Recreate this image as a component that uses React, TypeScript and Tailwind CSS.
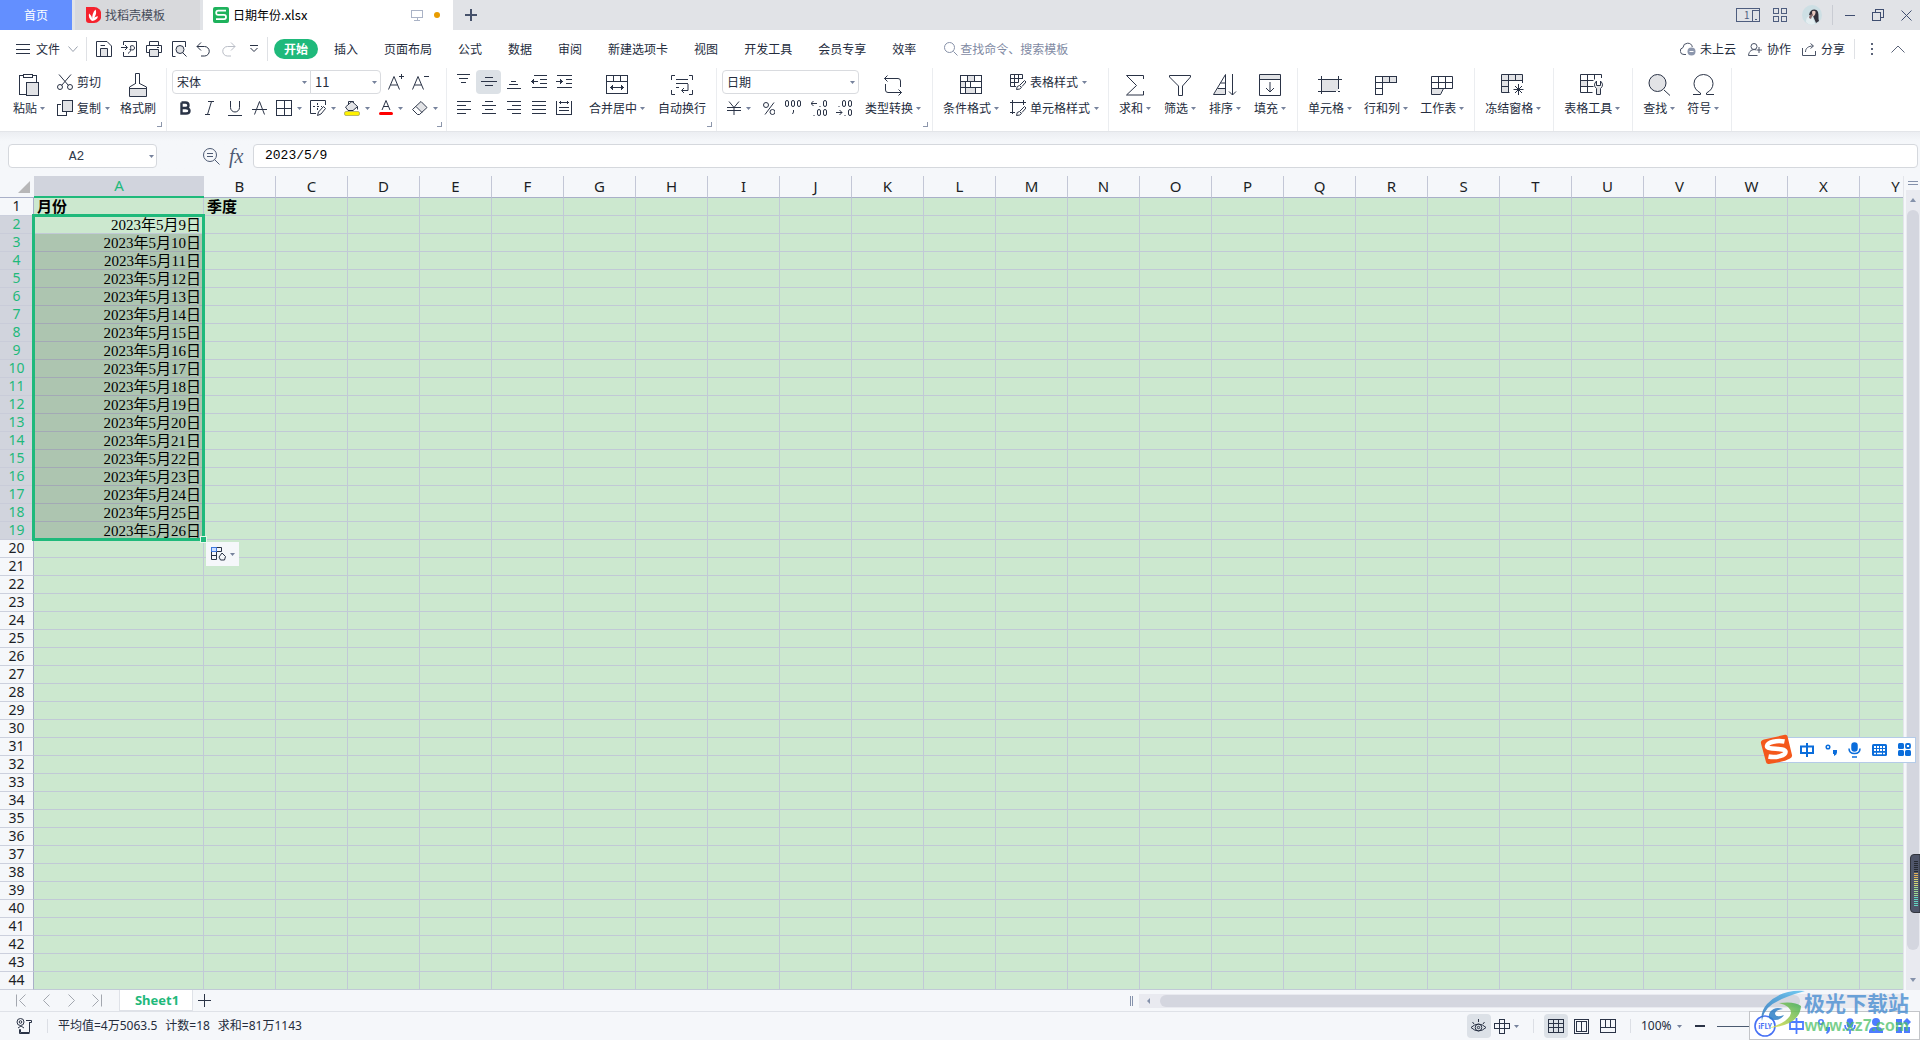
import { useState } from "react";
import type { ReactNode } from "react";
import clsx from "clsx";

const COLUMNS = "ABCDEFGHIJKLMNOPQRSTUVWXY".split("");
const ROWS = Array.from({ length: 44 }, (_, i) => i + 1);
const DATES = Array.from({ length: 18 }, (_, i) => `2023年5月${i + 9}日`);

const MENUS = ["开始", "插入", "页面布局", "公式", "数据", "审阅", "新建选项卡", "视图", "开发工具", "会员专享", "效率"];

const INK = "#2a3346";
const SHADE = "#e2e3e6";

interface IconProps {
  w: number;
  h: number;
  d?: string;
  fill?: string;
  color?: string;
  crisp?: boolean;
  children?: ReactNode;
}

// fill is a shaded area drawn under the strokes
function Icon({ w, h, d, fill, color = INK, crisp, children }: IconProps) {
  return (
    <svg
      width={w}
      height={h}
      viewBox={`0 0 ${w} ${h}`}
      fill="none"
      stroke={color}
      className="shrink-0"
      shapeRendering={crisp ? "crispEdges" : "auto"}
      aria-hidden="true"
    >
      {fill && <path d={fill} fill={SHADE} stroke="none" />}
      {d && <path d={d} />}
      {children}
    </svg>
  );
}

function Zero({ x, y }: { x: number; y: number }) {
  return <rect x={x} y={y} width="3" height="6" rx="1.5" />;
}

function Caret() {
  return (
    <svg width="5" height="3" viewBox="0 0 5 3" className="shrink-0" aria-hidden="true">
      <path d="M0 0h5L2.5 3z" fill="#76829c" />
    </svg>
  );
}

function Group({ className, launcher, children }: { className?: string; launcher?: boolean; children: ReactNode }) {
  return (
    <div className={clsx("relative flex shrink-0 border-r border-[#ebedf0] pt-[2px]", className)}>
      {children}
      {launcher && (
        <button aria-label="更多设置" className="absolute right-1 bottom-1">
          <Icon w={5} h={5} d="M4.5 0v4.5H0" color="#8c96ab" crisp />
        </button>
      )}
    </div>
  );
}

function BigButton({ label, icon, caret = true }: { label: string; icon: ReactNode; caret?: boolean }) {
  return (
    <button className="flex shrink-0 flex-col items-center pt-[2px]">
      <span className="flex h-[26px] items-center">{icon}</span>
      <span className="flex h-5 items-center gap-[3px] leading-5 whitespace-nowrap">
        {label}
        {caret && <Caret />}
      </span>
    </button>
  );
}

function SmallButton({ label, icon, caret = true }: { label: string; icon: ReactNode; caret?: boolean }) {
  return (
    <button className="flex h-6 items-center gap-1 whitespace-nowrap">
      {icon}
      {label}
      {caret && <Caret />}
    </button>
  );
}

function ToolButton({ label, caret, active, children }: { label: string; caret?: boolean; active?: boolean; children: ReactNode }) {
  return (
    <button
      aria-label={label}
      className={clsx("flex h-6 items-center justify-center rounded-sm", caret ? "w-[34px] gap-[5px]" : "w-[25px]", active && "bg-[#dce1e6]")}
    >
      {children}
      {caret && <Caret />}
    </button>
  );
}

function Select({ label, value, className }: { label: string; value: string; className?: string }) {
  return (
    <span className={clsx("relative flex h-6 items-center border border-[#d9dbdf] bg-white", className)}>
      <select aria-label={label} className="h-full w-full appearance-none bg-transparent pl-1 outline-none">
        <option>{value}</option>
      </select>
      <span className="pointer-events-none absolute right-[3px]">
        <Caret />
      </span>
    </span>
  );
}

function TitleBar() {
  return (
    <header className="flex h-[30px] shrink-0 items-stretch bg-[#e1e3e7]">
      <button className="mr-[3px] w-[72px] bg-[#638fff] text-white">首页</button>
      <button className="mr-[3px] flex w-[125px] items-center gap-1 bg-[#d8d9dc] pl-[11px] text-[#464c5a]">
        <svg width="15" height="16" viewBox="0 0 15 16" aria-hidden="true">
          <path d="M0 0h8a7.5 8 0 0 1 0 16H3a3 3 0 0 1-3-3z" fill="#f5222d" />
          <path d="M6 14C3 12 2.500 9 3 6.500 5 8 6 10 6.200 12 6 9 7 5 9.500 2.500 11 6 9.500 9 8 11c1-1 2.500-1.700 4-1.700C11.500 12 9 14 6 14z" fill="#fff" />
        </svg>
        找稻壳模板
      </button>
      <div className="flex w-[250px] items-center bg-white pr-[13px] pl-[10px] text-black">
        <svg width="16" height="16" viewBox="0 0 16 16" aria-hidden="true">
          <rect width="16" height="16" rx="2" fill="#1eb25c" />
          <path d="M13 3.700H5.200Q3.200 3.700 3.200 5.800T5.200 7.900H11q2 0 2 2.100t-2 2.200H3" fill="none" stroke="#fff" strokeWidth="1.800" />
        </svg>
        <span className="ml-1 flex-1 text-[13px]">
          <span className="text-xs">日期年份</span>.xlsx
        </span>
        <Icon w={12} h={12} d="M.5 1.500h11v7H.5zM6 8.500v3M3 11.500h6" color="#aab3c6" crisp />
        <span className="ml-[11px] h-[6px] w-[6px] rounded-full bg-[#e89c00]" />
      </div>
      <button aria-label="新建标签" className="flex w-9 items-center justify-center">
        <svg width="12" height="12" viewBox="0 0 12 12" aria-hidden="true">
          <path d="M6 0v12M0 6h12" stroke="#46526b" strokeWidth="2" />
        </svg>
      </button>
      <div className="ml-auto flex items-center">
        <button aria-label="多窗口">
          <Icon w={24} h={14} d="M.5.500h23v13H.5zM16.500 13V2.500H23M19 11.500h2" color="#4e5d7e" crisp>
            <text x="8" y="11" fontSize="10" fill="#4e5d7e" stroke="none">1</text>
          </Icon>
        </button>
        <button aria-label="应用" className="ml-[13px]">
          <Icon w={14} h={14} d="M.5.500h5v5h-5zM8.500.500h5v5h-5zM.5 8.500h5v5h-5zM8.500 8.500h5v5h-5z" color="#4e5d7e" crisp />
        </button>
        <button aria-label="账户" className="ml-[15px]">
          <svg width="20" height="20" viewBox="0 0 20 20" aria-hidden="true">
            <circle cx="10" cy="10" r="10" fill="#cddfe4" />
            <path d="M7 10c1-6 7-7 9-3 1 3 0 7 1 9l-3 2-3-7z" fill="#33313b" />
            <path d="M10 6.500c2-1.500 4-.5 3.500 1.500s-1.500 3.500-3 3.500z" fill="#e9c9bf" />
            <path d="M4 17c0-5 3-7 6-6l3 8q-6 2-9-2z" fill="#e4eef1" />
            <path d="M7 13c0-3 2-4 4-4l-2 5z" fill="#8a6b6c" />
          </svg>
        </button>
        <span className="ml-[10px] h-5 w-px bg-[#c9ccd3]" />
        <button aria-label="最小化" className="ml-3">
          <Icon w={10} h={12} d="M0 6.500h10" color="#3f4e70" crisp />
        </button>
        <button aria-label="还原" className="ml-[17px]">
          <Icon w={12} h={12} d="M.5 3.500h8v8h-8zM3.500 3V.5h8v8H9" color="#3f4e70" crisp />
        </button>
        <button aria-label="关闭" className="mr-2 ml-[17px]">
          <Icon w={11} h={11} d="M.5.500l10 10M10.500.500l-10 10" color="#3f4e70" />
        </button>
      </div>
    </header>
  );
}

function MenuBar() {
  const [active, setActive] = useState("开始");
  return (
    <nav className="flex h-[38px] shrink-0 items-center bg-white">
      <button className="ml-4 flex items-center">
        <Icon w={14} h={11} d="M0 .5h14M0 5.500h14M0 9.500h14" crisp />
        <span className="mr-2 ml-[6px]">文件</span>
        <Icon w={10} h={6} d="M.5.500L5 5.500 9.500.500" color="#9aa1ad" />
      </button>
      <span className="mr-[9px] ml-[8px] h-6 w-px bg-[#dfe1e5]" />
      <div className="flex items-center gap-[9px]">
        <button aria-label="保存">
          <Icon w={16} h={16} d="M.5 15.500V.5H11l4.500 4.500v10.500zM4.500 15V7.500h7V15M4.500 4.500H9" fill="M5 8h6v7H5z" />
        </button>
        <button aria-label="输出为PDF">
          <Icon w={16} h={16} d="M2.500 4V.5h13v15h-13V11M0 6.500h6M4 4l2.500 2.500L4 9M7 12.500c3-2 3-4 2.500-7.500 2-1 4 0 4 2s-2 2.500-5 1.500" />
        </button>
        <button aria-label="打印">
          <Icon w={16} h={16} d="M3.500 4V.5h9V4M3.500 11.500h-3v-7h15v7h-3M3.500 8.500h9v7h-9zM11 6.500h2" fill="M4 9h8v6H4z" />
        </button>
        <button aria-label="打印预览">
          <Icon w={16} h={16} d="M4.500 15.500h-3V.5h13V6M11.500 11.500l4 4">
            <circle cx="9" cy="8.500" r="4" fill={SHADE} />
          </Icon>
        </button>
        <button aria-label="撤销">
          <Icon w={15} h={15} d="M5 .5L1 4.500l4 4M1 4.500h7.500a4.700 4.700 0 0 1 0 9.500H5" />
        </button>
        <button aria-label="恢复" className="ml-px">
          <Icon w={15} h={15} d="M10 .5l4 4-4 4M14 4.500H6.500A4.700 4.700 0 0 0 6.500 14H10" color="#b9bdc6" />
        </button>
        <button aria-label="自定义快速访问" className="ml-[5px]">
          <Icon w={8} h={8} d="M0 .5h8M.5 3L4 6.500 7.500 3" />
        </button>
      </div>
      <span className="mr-[6px] ml-[9px] h-6 w-px bg-[#dfe1e5]" />
      <div className="flex items-center gap-[2px]">
        {MENUS.map((m) => (
          <button
            key={m}
            onClick={() => setActive(m)}
            className={clsx("h-5 rounded-full whitespace-nowrap", m === active ? "mr-[2px] w-11 bg-[#1fb97b] font-bold text-white" : "px-3")}
          >
            {m}
          </button>
        ))}
      </div>
      <label className="ml-4 flex items-center gap-[2px]">
        <Icon w={14} h={14} d="M9.500 9.500L13.500 13.500" color="#8791a8">
          <circle cx="5.500" cy="5.500" r="5" />
        </Icon>
        <input aria-label="搜索" placeholder="查找命令、搜索模板" className="w-32 bg-transparent outline-none placeholder:text-[#7f8aa3]" />
      </label>
      <div className="ml-auto flex items-center whitespace-nowrap">
        <button className="flex items-center gap-1">
          <Icon w={16} h={14} d="M6 12.500H4A3.500 3.500 0 0 1 3 5.600a4.700 4.700 0 0 1 9.300-.6" color="#4a5366">
            <circle cx="11.500" cy="9.500" r="4" fill="#8d97ad" stroke="none" />
            <path d="M9.500 9.500h4" stroke="#fff" />
          </Icon>
          未上云
        </button>
        <button className="ml-3 flex items-center gap-[5px]">
          <Icon w={14} h={13} d="M8 6.800c-4-.8-7 1-7.500 5.700h9M11 4v6M8.500 7H14" color="#4a5366">
            <circle cx="6" cy="3.500" r="3" />
          </Icon>
          协作
        </button>
        <button className="ml-[11px] flex items-center gap-[5px]">
          <Icon w={14} h={13} d="M.5 5v7.500h13V8M3.500 9c0-4 3-6 7.500-6M8.500.500L11.500 3 8.500 5.500" color="#4a5366" />
          分享
        </button>
        <span className="ml-[9px] h-5 w-px bg-[#dfe1e5]" />
        <button aria-label="更多" className="ml-4">
          <Icon w={2} h={12} color="#5b6479">
            <path d="M1 0v2M1 5v2M1 10v2" strokeWidth="2" />
          </Icon>
        </button>
        <button aria-label="收起功能区" className="mr-[15px] ml-[18px]">
          <Icon w={14} h={8} d="M.5 7.500L7 1l6.500 6.500" color="#5b6479" />
        </button>
      </div>
    </nav>
  );
}

const ALIGN_TOP = [
  { label: "顶端对齐", d: "M1 .5h13M3 4.500h9M5 8.500h5" },
  { label: "垂直居中", d: "M4 3.500h8M0 7.500h16M4 11.500h8" },
  { label: "底端对齐", d: "M5 7.500h5M3 10.500h9M1 14.500h14" },
  { label: "减少缩进", d: "M3 1.500h13M9 5.500h7M9 9.500h7M1 13.500h15M0 7.500h7M2.500 5v5M1.500 6v3" },
  { label: "增加缩进", d: "M1 1.500h15M10 5.500h6M10 9.500h6M1 13.500h15M0 7.500h7M4.500 5v5M5.500 6v3" },
];
const ALIGN_BOTTOM = [
  { label: "左对齐", d: "M1 1.500h14M1 5.500h9M1 9.500h14M1 13.500h9" },
  { label: "水平居中", d: "M4 1.500h8M1 5.500h14M4 9.500h8M1 13.500h14" },
  { label: "右对齐", d: "M1 1.500h14M6 5.500h9M1 9.500h14M6 13.500h9" },
  { label: "两端对齐", d: "M1 1.500h14M1 5.500h14M1 9.500h14M1 13.500h14" },
  { label: "分散对齐", d: "M.5 1v14M15.500 1v14M3 2.500h10M4.500 1v3M11.500 1v3M3 7.500h10M3 10.500h10M1 14.500h14" },
];

function Ribbon() {
  return (
    <div className="flex h-16 shrink-0 overflow-hidden border-b border-[#e3e5e9] bg-white">
      <Group className="w-[167px] pl-[13px]" launcher>
        <BigButton
          label="粘贴"
          icon={<Icon w={22} h={24} d="M5 2.500H1.500v19H8M15 2.500h3.500V9M5.500 1.500h9v3h-9zM8.500 9.500h12v13h-12z" fill="M9 10h11v12H9z" crisp />}
        />
        <div className="ml-3 flex flex-col gap-[2px]">
          <SmallButton
            label="剪切"
            caret={false}
            icon={
              <Icon w={16} h={16} d="M2 .5l9.500 11M14 .5L4.500 11.500">
                <circle cx="3" cy="13" r="2.500" />
                <circle cx="13" cy="13" r="2.500" />
              </Icon>
            }
          />
          <SmallButton label="复制" icon={<Icon w={16} h={16} d="M4 4.500H.5v11h9V12M5.500.500h10v11h-10z" fill="M6 1h9v10H6z" crisp />} />
        </div>
        <div className="ml-[10px]">
          <BigButton
            label="格式刷"
            caret={false}
            icon={<Icon w={20} h={25} d="M7.500 11V.5h4V11M7.500 10.500L1.500 14v9.500h17V14l-7-3.500M1.500 15.500h17" fill="M2 16h16v7H2z" />}
          />
        </div>
      </Group>

      <Group className="w-[280px] flex-col gap-[2px] pl-[5px]" launcher>
        <div className="flex items-center">
          <Select label="字体" value="宋体" className="w-[139px] rounded-l-sm" />
          <Select label="字号" value="11" className="-ml-px w-[71px] rounded-r-sm text-[13px]" />
          <button aria-label="增大字号" className="ml-[7px]">
            <Icon w={16} h={16} d="M.5 15.500L6 2.500l5.500 13M2.500 11h7M11 2.500h5M13.500 0v5" />
          </button>
          <button aria-label="减小字号" className="ml-2">
            <Icon w={17} h={16} d="M.5 15.500L6 2.500l5.500 13M2.500 11h7M12 2.500h5" />
          </button>
        </div>
        <div className="flex">
          <ToolButton label="加粗">
            <Icon w={12} h={14}>
              <path d="M2.500 1.500h4q3 0 3 2.700T6.500 7h-4M6.500 7q4 0 4 2.700t-3.500 2.800H2.500v-11" strokeWidth="2.400" />
            </Icon>
          </ToolButton>
          <ToolButton label="倾斜">
            <Icon w={9} h={14} d="M3 .5h6M0 13.500h5M6.500.500l-4 13" />
          </ToolButton>
          <ToolButton label="下划线">
            <Icon w={14} h={15} d="M2.500 0v6.500a4.500 4.500 0 0 0 9 0V0M0 14.500h14" />
          </ToolButton>
          <ToolButton label="删除线">
            <Icon w={15} h={14} d="M2.500 13.500l5-13 5 13M0 8.500h15" />
          </ToolButton>
          <ToolButton label="边框" caret>
            <Icon w={16} h={16} d="M.5.500h15v15H.5zM8.500 0v16M0 8.500h16" crisp />
          </ToolButton>
          <ToolButton label="绘制边框" caret>
            <Icon w={16} h={16} d="M15.500 5V.5H.5v13H6M3 6.500h2M7 6.500h2M7.500 3v2M7.500 8v2M11 6.500h1M7.500 15.500l1-3.500L13.500 6.500l2 2L11 14z" />
          </ToolButton>
          <ToolButton label="填充颜色" caret>
            <Icon w={16} h={16} d="M4.500 5V1.500h5V3M1.500 7L8 1.500 13.500 6.500 9 10.500H4zM13.500 6.500v3" fill="M3 7l5-4 5 4-4 3.500H4z">
              <rect x=".5" y="11.500" width="15" height="4" rx="1.500" fill="#fff200" stroke="#8d8f52" strokeWidth=".6" />
            </Icon>
          </ToolButton>
          <ToolButton label="字体颜色" caret>
            <Icon w={14} h={16} d="M3 10L7 .5 11 10M4.500 6.500h5">
              <path d="M1.500 13.500h11" stroke="#f00" strokeWidth="3" strokeLinecap="round" />
            </Icon>
          </ToolButton>
          <ToolButton label="清除" caret>
            <Icon w={16} h={14} d="M.5 8.500L9 .5l6 6-7.500 7H5.500zM4 5.500l6 6" fill="M5 5l4-4 5 5-4 5z" />
          </ToolButton>
        </div>
      </Group>

      <Group className="w-[270px] pl-1" launcher>
        <div className="flex flex-col gap-[2px]">
          <div className="flex">
            {ALIGN_TOP.map((a, i) => (
              <ToolButton key={a.label} label={a.label} active={i === 1}>
                <Icon w={16} h={16} d={a.d} crisp />
              </ToolButton>
            ))}
          </div>
          <div className="flex">
            {ALIGN_BOTTOM.map((a) => (
              <ToolButton key={a.label} label={a.label}>
                <Icon w={16} h={16} d={a.d} crisp />
              </ToolButton>
            ))}
          </div>
        </div>
        <div className="ml-[13px] flex gap-[13px]">
          <BigButton
            label="合并居中"
            icon={<Icon w={22} h={20} d="M.5.500h21v18H.5zM.5 6.500h21M7.500.500v6M14.500.500v6M4 12.500h14M6.500 10v5M15.500 10v5M5.500 11v3M16.500 11v3" crisp />}
          />
          <BigButton
            label="自动换行"
            caret={false}
            icon={<Icon w={22} h={20} d="M4 .5H.5V5M18 .5h3.500V5M4 19.500H.5V15M18 19.500h3.500V15M5 4.500h12M5 8.500h12M5 12.500h3M17 9v6.500h-6M13 13l-2.500 2.500L13 18" />}
          />
        </div>
      </Group>

      <Group className="w-[216px] pl-[5px]" launcher>
        <div className="flex flex-col gap-[2px]">
          <Select label="数字格式" value="日期" className="w-[137px] rounded-sm" />
          <div className="flex">
            <ToolButton label="货币" caret>
              <Icon w={14} h={14} d="M2 .5l5 6 5-6M0 6.500h14M0 9.500h14M7 6.500V14" />
            </ToolButton>
            <ToolButton label="百分比">
              <Icon w={12} h={13} d="M11 .5L2 12.500">
                <circle cx="3" cy="3" r="2.500" />
                <circle cx="9.500" cy="10" r="2.500" />
              </Icon>
            </ToolButton>
            <ToolButton label="千位分隔">
              <Icon w={17} h={16} d="M8.500 10v2M8.500 12l-1 2">
                <Zero x={0.5} y={0.5} />
                <Zero x={6.5} y={0.5} />
                <Zero x={12.5} y={0.5} />
              </Icon>
            </ToolButton>
            <ToolButton label="增加小数位">
              <Icon w={16} h={16} d="M0 3.500h6M2.500 1L0 3.500 2.500 6M8.500 6.500h1M2.500 15.500h1">
                <Zero x={12.5} y={0.5} />
                <Zero x={6.5} y={9.5} />
                <Zero x={12.5} y={9.5} />
              </Icon>
            </ToolButton>
            <ToolButton label="减少小数位">
              <Icon w={16} h={16} d="M0 12.500h6M3.500 10L6 12.500 3.500 15M2.500 6.500h1M8.500 15.500h1">
                <Zero x={6.5} y={0.5} />
                <Zero x={12.5} y={0.5} />
                <Zero x={12.5} y={9.5} />
              </Icon>
            </ToolButton>
          </div>
        </div>
        <div className="ml-[6px]">
          <BigButton
            label="类型转换"
            icon={<Icon w={20} h={21} d="M4.500.500L1.500 3.500l3 3M1.500 3.500H15q2.500 0 2.500 2.500v6M15.500 14.500l3 3-3 3M18.500 17.500H5Q2.500 17.500 2.500 15V9" />}
          />
        </div>
      </Group>

      <Group className="gap-[11px] pr-[9px] pl-[10px]">
        <BigButton
          label="条件格式"
          icon={<Icon w={22} h={20} d="M.5.500h21v18H.5zM0 6.500h22M0 12.500h22M7.500.500v6M14.500.500v6M10.500 6.500v6M5.500 6.500v12M15.500 12.500v6" fill="M8 1h6v5H8zM1 7h5v5H1zM6 13h9v5H6z" crisp />}
        />
        <div className="flex flex-col gap-[2px]">
          <SmallButton
            label="表格样式"
            icon={<Icon w={16} h={16} d="M6 12.500H.5v-12h12V5M.5 4.500h12M.5 8.500h8M4.500.500v12M8.500.500v8M6.500 15.500q0-4 3-4l2 2q-1 2-5 2zM10 11l4.500-4.500 1.500 1.500-4 4.500" />}
          />
          <SmallButton
            label="单元格样式"
            icon={<Icon w={16} h={16} d="M2.500 0v14M0 2.500h16M0 12.500h5M13.500 0v5M6.500 15.500q0-4 3-4l2 2q-1 2-5 2zM10 11l4.500-4.500 1.500 1.500-4 4.500" />}
          />
        </div>
      </Group>

      <Group className="gap-[13px] pr-[11px] pl-[10px]">
        <BigButton label="求和" icon={<Icon w={18} h={21} d="M17.500 4V.5H.5l10 10-10 9.500h17V16" />} />
        <BigButton label="筛选" icon={<Icon w={22} h={21} d="M.5.500h21v1.500L13.500 11v9.500h-4V11L.5 2z" />} />
        <BigButton
          label="排序"
          icon={<Icon w={24} h={22} d="M.5 20.500L12.500.500v20zM4.500 14.500h8M7.500 9h5M19.500 0v21M16 17.500l3.500 3.500 3.500-3.500" fill="M5 15h8v5H1.500z" />}
        />
        <BigButton label="填充" icon={<Icon w={22} h={22} d="M.5.500h21v21H.5zM.5 5.500h21M11 8v10M7 14l4 4 4-4" fill="M1 1h20v4H1z" />} />
      </Group>

      <Group className="gap-3 pr-[10px] pl-[10px]">
        <BigButton label="单元格" icon={<Icon w={24} h={19} d="M3.500 0v18M0 3.500h24M20.500 0v13M0 15.500h18M20 15.500h2" fill="M4 4h16v11H4z" crisp />} />
        <BigButton label="行和列" icon={<Icon w={22} h={19} d="M.5.500h21v6H.5zM7.500.500v18h-7V.5M14.500.500v6M.5 12.500h7" fill="M8 1h13v5H8z" crisp />} />
        <BigButton label="工作表" icon={<Icon w={22} h={19} d="M.5.500h21v12H.5zM7.500.500v12M14.500.500v12M.5 6.500h21M.5 12.500v6h9l3-6" fill="M1 13h11l-3 5H1z" />} />
      </Group>

      <Group className="pr-3 pl-[10px]">
        <BigButton
          label="冻结窗格"
          icon={<Icon w={24} h={22} d="M21.500 9V.5H.5v18h8M.5 6.500h21M7.500.500v18M14.500.500v6M.5 12.500h7M17.500 10v11M12.500 15.500h10M14 12l7 7M21 12l-7 7" fill="M1 1h20v5H1zM1 7h6v11H1z" />}
        />
      </Group>
      <Group className="pr-3 pl-[10px]">
        <BigButton
          label="表格工具"
          icon={<Icon w={24} h={22} d="M21.500 4V.5H.5v18h12M.5 6.500h13M7.500.500v18M14.500.500v5M.5 12.500h13M16.500 7q-4 4 0 7.500v6h4v-6q4-3.500 0-7.500v4.500h-4z" fill="M1 7h6v6H1zM17 12h3v8h-3z" />}
        />
      </Group>
      <Group className="gap-3 pr-3 pl-[10px]">
        <BigButton
          label="查找"
          icon={
            <Icon w={23} h={22} d="M16 16l6 5.500">
              <circle cx="9.500" cy="9" r="8.500" fill={SHADE} />
            </Icon>
          }
        />
        <BigButton label="符号" icon={<Icon w={21} h={22} d="M0 20.500h7.500V19Q1 15.500 1 9.500a9.500 9 0 0 1 19 0q0 6-6.500 9.500v1.500H21" />} />
      </Group>
    </div>
  );
}

function FormulaBar() {
  return (
    <div className="flex h-11 shrink-0 items-center bg-linear-to-b from-[#eceef2] to-[#f5f7fa] to-20% pt-1 pr-[2px] pl-2">
      <div className="relative flex h-6 w-[149px] items-center rounded-sm border border-[#d5d8dd] bg-white">
        <input
          aria-label="名称框"
          defaultValue="A2"
          className="h-full w-full bg-transparent pr-3 text-center font-['Liberation_Mono','Noto_Sans_CJK_SC',monospace] text-[13px] text-[#333b4c] outline-none"
        />
        <span className="pointer-events-none absolute right-[2px]">
          <Caret />
        </span>
      </div>
      <button aria-label="缩放" className="ml-[46px]">
        <Icon w={17} h={17} d="M11.500 11.500l5 5M4 5.500h6M4 8.500h6" color="#4d5a73">
          <circle cx="7" cy="7" r="6.500" />
        </Icon>
      </button>
      <button aria-label="插入函数" className="ml-[9px] w-6 text-left font-['Liberation_Serif',serif] text-xl leading-6 text-[#4d5a73] italic">
        fx
      </button>
      <input
        aria-label="编辑栏"
        defaultValue="2023/5/9"
        className="h-6 min-w-0 flex-1 rounded-sm border border-[#d5d8dd] bg-white pb-[2px] pl-[11px] font-['Liberation_Mono','Noto_Sans_CJK_SC',monospace] text-[13px] text-black outline-none"
      />
    </div>
  );
}

function Sheet() {
  return (
    <div className="relative min-w-0 flex-1 overflow-hidden">
      <table className="w-max table-fixed border-separate border-spacing-0">
        <colgroup>
          <col className="w-[34px]" />
          {COLUMNS.map((c) => (
            <col key={c} className={c === "A" ? "w-[170px]" : "w-[72px]"} />
          ))}
        </colgroup>
        <thead>
          <tr className="h-[22px] font-['Noto_Sans',sans-serif] text-[15px] leading-[18px]">
            <th aria-label="全选" className="border-b border-[#a9b0c8] bg-[#f5f7fa] p-0">
              <svg width="12" height="12" viewBox="0 0 12 12" className="ml-[18px]" aria-hidden="true">
                <path d="M12 0v12H0z" fill="#b7b7b8" />
              </svg>
            </th>
            {COLUMNS.map((c) => (
              <th
                key={c}
                className={clsx(
                  "p-0 pb-[2px] font-normal",
                  c === "A" ? "border-b-2 border-[#1fb97b] bg-[#d1d4dd] text-[#1fb97b]" : "border-r border-b border-r-[#c3c7d6] border-b-[#a9b0c8] bg-[#f5f7fa] text-[#1b1e25]"
                )}
              >
                {c}
              </th>
            ))}
          </tr>
        </thead>
        <tbody>
          {ROWS.map((r) => {
            const selected = r >= 2 && r <= 19;
            return (
              <tr key={r} className="h-[18px]">
                <th
                  className={clsx(
                    "border-r border-b border-r-[#a9b0c8] p-0 pb-[2px] font-['Noto_Sans',sans-serif] text-sm leading-[15px] font-normal",
                    selected ? "border-b-[#c9ccd9] bg-[#d1d4dd] text-[#1fb97b]" : "border-b-[#ccd0dd] bg-[#f5f7fa] text-[#1b1e25]"
                  )}
                >
                  {r}
                </th>
                {COLUMNS.map((c) => (
                  <td
                    key={c}
                    className={clsx(
                      "border-r border-b border-[#c1c9d6] p-0 pt-[2px] font-['Liberation_Serif','Noto_Sans_CJK_SC',serif] text-[15px] leading-[15px] whitespace-nowrap text-black",
                      r === 1 && "pl-[3px] font-bold",
                      c === "A" && selected && "pr-[2px] text-right",
                      c === "A" && r > 2 && r <= 19 ? "border-b-[#a3a9b5] bg-[#adc5b0]" : "bg-[#cce8cf]"
                    )}
                  >
                    {r === 1 && c === "A" && "月份"}
                    {r === 1 && c === "B" && "季度"}
                    {c === "A" && selected && DATES[r - 2]}
                  </td>
                ))}
              </tr>
            );
          })}
        </tbody>
      </table>

      {/* selection frame over A2:A19 */}
      <div className="pointer-events-none absolute top-[38px] left-8 h-[327px] w-[173px] border-3 border-[#1fb97b]">
        <span className="absolute -right-[5px] -bottom-[5px] h-[7px] w-[7px] border border-[#e9f6ea] bg-[#1fb97b]" />
      </div>
      <button aria-label="自动填充选项" className="absolute top-[366px] left-[206px] flex h-6 w-[33px] items-center gap-1 bg-[#f5f7fa] pl-[5px]">
        <Icon w={15} h={15} d="M.5.500h10v4H.5zM5.500.500v12h-5V.5M.5 8.500h5M11 6l3.500 3.500-1 3.500h-4L8 10z">
          <path d="M.5.500h5v4h-5z" fill="#cfe0ff" stroke="#3d78e0" />
        </Icon>
        <Caret />
      </button>
    </div>
  );
}

function VerticalScroll() {
  return (
    <div className="flex w-[17px] shrink-0 flex-col border-l border-[#e3e5ea] bg-[#f5f7fa] pl-[2px]">
      <div className="flex h-[14px] items-center justify-center">
        <Icon w={10} h={4} d="M0 .5h10M0 3.500h10" color="#8592ab" crisp />
      </div>
      <div className="flex min-h-0 flex-1 flex-col items-center bg-[#e9eaf0]">
        <button aria-label="向上滚动" className="flex h-5 items-center">
          <svg width="6" height="4" viewBox="0 0 6 4" aria-hidden="true"><path d="M0 4l3-4 3 4z" fill="#8592ab" /></svg>
        </button>
        <div className="mb-5 w-3 flex-1 rounded-full bg-[#d4d6df]" />
        <button aria-label="向下滚动" className="flex h-5 items-center">
          <svg width="6" height="4" viewBox="0 0 6 4" aria-hidden="true"><path d="M0 0l3 4 3-4z" fill="#8592ab" /></svg>
        </button>
      </div>
    </div>
  );
}

const SHEET_NAV = [
  { label: "第一张", w: 10, d: "M.5.500v12M9.500.500L3.500 6.500l6 6" },
  { label: "上一张", w: 7, d: "M6.500.500l-6 6 6 6" },
  { label: "下一张", w: 7, d: "M.5.500l6 6-6 6" },
  { label: "最后一张", w: 10, d: "M9.500.500v12M.5.500l6 6-6 6" },
];

function SheetTabs() {
  return (
    <div className="flex h-[22px] shrink-0 items-stretch border-b border-[#dfe2e8] bg-[#f5f7fa]">
      <div className="flex w-[119px] items-center justify-between pr-[17px] pl-4">
        {SHEET_NAV.map((n) => (
          <button key={n.label} aria-label={n.label}>
            <Icon w={n.w} h={13} d={n.d} color="#a3a7af" />
          </button>
        ))}
      </div>
      <button className="w-[74px] border-x border-b border-[#dfe2e8] bg-white pl-[2px] font-['Noto_Sans',sans-serif] text-[13px] leading-5 font-bold text-[#1fb97b]">
        Sheet1
      </button>
      <button aria-label="新建工作表" className="ml-[5px]">
        <Icon w={13} h={13} d="M6.500 0v13M0 6.500h13" crisp />
      </button>
      <div className="ml-auto flex w-[790px] items-center pr-[17px]">
        <Icon w={3} h={10} d="M.5 0v10M2.500 0v10" color="#8592ab" crisp />
        <div className="ml-[6px] flex h-[14px] flex-1 items-center bg-[#e9eaf0] pl-2">
          <svg width="3" height="6" viewBox="0 0 3 6" aria-hidden="true"><path d="M3 0v6L0 3z" fill="#8592ab" /></svg>
          <div className="ml-[10px] h-3 w-[640px] rounded-full bg-[#d4d6df]" />
        </div>
      </div>
    </div>
  );
}

function StatusBar() {
  return (
    <footer className="flex h-7 shrink-0 items-center bg-[#f5f7fa] pl-4">
      <Icon w={16} h={16} d="M10 2.500h5.500v2H13M13.500 4v10.500h-9v-3H3.500v4h10M2 10l3-2 3 2">
        <circle cx="4.500" cy="4" r="3.500" />
        <circle cx="4.500" cy="4" r="1.300" />
      </Icon>
      <span className="mr-[10px] ml-[15px] h-[14px] w-px bg-[#dcdfe5]" />
      <span className="flex gap-2 font-['Noto_Sans','Noto_Sans_CJK_SC',sans-serif]">
        <span>平均值=4万5063.5</span>
        <span>计数=18</span>
        <span>求和=81万1143</span>
      </span>
      <div className="ml-auto flex w-[453px] items-center">
        <button aria-label="护眼模式" className="flex h-6 w-6 items-center justify-center rounded-sm bg-[#dce1e7]">
          <Icon w={18} h={16} d="M1 9.500q7.500-7 15 0-7.500 7-15 0M2.500 4l1.500 2M8.500 1v3M14.500 4L13 6">
            <circle cx="8.500" cy="9.500" r="3.300" />
            <circle cx="8.500" cy="9.500" r="1.200" />
          </Icon>
        </button>
        <button aria-label="阅读模式" className="ml-[3px] flex items-center gap-1">
          <Icon w={16} h={15} d="M5.500.500h5v4h5v5h-5v5h-5v-5h-5v-5h5zM5.500 4.500h5v5h-5z" crisp />
          <Caret />
        </button>
        <span className="ml-[14px] h-[14px] w-px bg-[#dcdfe5]" />
        <button aria-label="普通视图" className="ml-[10px] flex h-6 w-6 items-center justify-center rounded-sm bg-[#dce1e7]">
          <Icon w={16} h={14} d="M.5.500h15v13H.5zM5.500.500v13M10.500.500v13M.5 4.500h15M.5 8.500h15" crisp />
        </button>
        <button aria-label="页面布局视图" className="ml-[6px]">
          <Icon w={15} h={15} d="M.5.500h14v14H.5zM2.500 2.500h10v10h-10zM7.500 2.500v10" crisp />
        </button>
        <button aria-label="分页预览" className="ml-[11px]">
          <Icon w={16} h={14} d="M.5.500h15v13H.5zM.5 8.500h10v-8M5.500.500v8M10.500 8.500h5" crisp />
        </button>
        <span className="ml-[14px] h-[14px] w-px bg-[#dcdfe5]" />
        <button className="ml-[10px] flex items-center gap-[5px] font-['Noto_Sans',sans-serif] text-xs">
          100%
          <Caret />
        </button>
        <button aria-label="缩小" className="mr-3 ml-[13px] h-[2px] w-[10px] bg-[#2a3346]" />
        <span className="h-px flex-1 bg-[#4a5a70]" />
      </div>
    </footer>
  );
}

function SogouBar() {
  return (
    <div className="absolute top-[734px] right-0 flex items-center">
      <svg width="33" height="31" viewBox="0 0 33 31" className="z-10 -mr-4" aria-hidden="true">
        <path d="M4 5.500L25 .8q2-.4 2.500 1.500L32 21q.5 2-2 3.500Q24 28 9 30q-2.500.3-3-2L1 9.500Q.3 6.500 4 5.500z" fill="#f4581c" />
        <path d="M24.500 7.500C17 6 7.500 8 7 12c-.4 4.500 17.500 1 18.500 5.500C26 21.500 16 24 8.500 22.500" fill="none" stroke="#fff" strokeWidth="4.500" />
      </svg>
      <div className="mr-1 flex h-[26px] items-center gap-[11px] border border-[#b4cbe8] bg-white pr-1 pl-[22px]">
        <svg width="14" height="14" viewBox="0 0 14 14" fill="none" stroke="#0a6ddb" strokeWidth="2" aria-hidden="true">
          <path d="M1 3.500h12v6.500H1zM7 0v14" />
        </svg>
        <svg width="12" height="12" viewBox="0 0 12 12" aria-hidden="true">
          <circle cx="3" cy="3" r="1.800" fill="none" stroke="#0a6ddb" strokeWidth="1.500" />
          <path d="M8 6h4v2.500q0 2-3 3.500V10H8z" fill="#0a6ddb" />
        </svg>
        <svg width="13" height="16" viewBox="0 0 13 16" fill="none" stroke="#0a6ddb" strokeWidth="1.500" aria-hidden="true">
          <rect x="4" y="1" width="5" height="8" rx="2.500" fill="#0a6ddb" />
          <path d="M1 6.500q0 5 5.500 5t5.500-5M4 15h5" />
        </svg>
        <svg width="15" height="12" viewBox="0 0 15 12" aria-hidden="true">
          <rect width="15" height="12" rx="1.500" fill="#0a6ddb" />
          <path d="M2 3h11M2 6h11" stroke="#fff" strokeWidth="2" strokeDasharray="2 1" />
          <path d="M2 9.500h2M5 9.500h5M11 9.500h2" stroke="#fff" strokeWidth="1.500" />
        </svg>
        <svg width="13" height="13" viewBox="0 0 13 13" fill="#0a6ddb" aria-hidden="true">
          <rect width="6" height="6" rx="1.500" />
          <rect y="7" width="6" height="6" rx="1.500" />
          <rect x="7" y="7" width="6" height="6" rx="1.500" />
          <rect x="8" y="1" width="4" height="4" rx="1" fill="none" stroke="#0a6ddb" strokeWidth="1.800" />
        </svg>
      </div>
    </div>
  );
}

function LevelMeter() {
  return (
    <svg width="10" height="59" viewBox="0 0 10 59" className="absolute top-[854px] right-0" aria-hidden="true">
      <path d="M10 .5H4Q.5.500.500 4v51q0 3.500 3.500 3.500h6z" fill="#50566a" stroke="#33363f" />
      <path d="M4 7.500h4M4 9.500h4M4 11.500h4M4 13.500h4M4 15.500h4M4 17.500h4" stroke="#262932" />
      <path d="M4 19.500h4M4 21.500h4M4 23.500h4" stroke="#e3b358" />
      <path d="M4 25.500h4M4 27.500h4M4 29.500h4M4 31.500h4" stroke="#d5d675" />
      <path d="M4 33.500h4M4 35.500h4M4 37.500h4M4 39.500h4M4 41.500h4" stroke="#9fdb91" />
      <path d="M4 43.500h4M4 45.500h4M4 47.500h4M4 49.500h4M4 51.500h4" stroke="#63d6c0" />
    </svg>
  );
}

function FlyBar() {
  return (
    <div className="absolute right-0 bottom-0 h-[50px] w-[171px]">
      <div className="absolute bottom-0 left-0 flex h-[29px] w-full items-center gap-[13px] border border-[#c3c5c9] bg-white pl-1">
        <svg width="22" height="22" viewBox="0 0 22 22" aria-hidden="true">
          <circle cx="11" cy="11" r="10" fill="none" stroke="#4670f5" strokeWidth="1.600" />
          <text x="11" y="14" fontSize="7" fontWeight="bold" textAnchor="middle" fill="#4670f5">iFLY</text>
        </svg>
        <svg width="15" height="16" viewBox="0 0 15 16" fill="none" stroke="#4d7cff" strokeWidth="1.800" aria-hidden="true">
          <path d="M1 4h13v7H1zM7.500 0v16" />
        </svg>
        <svg width="14" height="16" viewBox="0 0 14 16" fill="#4d7cff" aria-hidden="true">
          <circle cx="4" cy="4" r="2.200" fill="none" stroke="#4d7cff" strokeWidth="1.600" />
          <path d="M9 9h4v3q0 2-3 4l-1-1 1-2H9z" />
        </svg>
        <svg width="12" height="16" viewBox="0 0 12 16" fill="none" stroke="#4d7cff" strokeWidth="1.600" aria-hidden="true">
          <rect x="3.500" y="1" width="5" height="8" rx="2.500" fill="#4d7cff" />
          <path d="M1 7q0 5 5 5t5-5M6 12v4" />
        </svg>
        <svg width="14" height="15" viewBox="0 0 14 15" fill="#4d7cff" aria-hidden="true">
          <circle cx="7" cy="4" r="4" />
          <path d="M0 15v-2q1-4 5-4h4q4 0 5 4v2z" />
        </svg>
        <svg width="15" height="15" viewBox="0 0 15 15" fill="#4d7cff" aria-hidden="true">
          <path d="M0 1h6v6H0zM0 9h6v6H0zM8 9h6v6H8zM11 0l4 4-4 4-4-4z" />
        </svg>
      </div>
      <svg width="46" height="38" viewBox="0 0 46 38" className="absolute top-0 left-3 opacity-85" aria-hidden="true">
        <defs>
          <linearGradient id="swirl" x1="0" y1="1" x2="1" y2="0">
            <stop offset="0" stopColor="#2b74bd" />
            <stop offset="1" stopColor="#5cc3f0" />
          </linearGradient>
          <linearGradient id="leaf" x1="0" y1="1" x2="1" y2="0">
            <stop offset="0" stopColor="#e5e04a" />
            <stop offset="1" stopColor="#3fae58" />
          </linearGradient>
        </defs>
        <path d="M44 1Q20-1 6 14-1 22 1 31q2-14 16-20Q26 6 44 1z" fill="url(#swirl)" />
        <path d="M18 13q16-2 22 3-1 19-32 22 20-6 22-15 0-7-12-10z" fill="url(#leaf)" />
        <path d="M22 19q-8-3-13 3-4 8 5 8 6 0 9-5-8 3-9-1 0-4 8-5z" fill="#2f7fc6" />
      </svg>
      <div className="absolute top-0 right-[11px] flex flex-col items-end opacity-75">
        <span className="text-[21px] leading-6 font-bold text-[#3f88cf]">极光下载站</span>
        <span className="font-['Liberation_Sans',sans-serif] text-base leading-6 font-bold text-[#4dbf68]">www.xz7.com</span>
      </div>
    </div>
  );
}

export default function App() {
  return (
    <div className="relative flex h-screen w-full flex-col overflow-hidden bg-white font-['Noto_Sans_CJK_SC',sans-serif] text-xs text-[#242c3d]">
      <TitleBar />
      <MenuBar />
      <Ribbon />
      <FormulaBar />
      <main className="flex min-h-0 flex-1">
        <Sheet />
        <VerticalScroll />
      </main>
      <SheetTabs />
      <StatusBar />
      <SogouBar />
      <LevelMeter />
      <FlyBar />
    </div>
  );
}
